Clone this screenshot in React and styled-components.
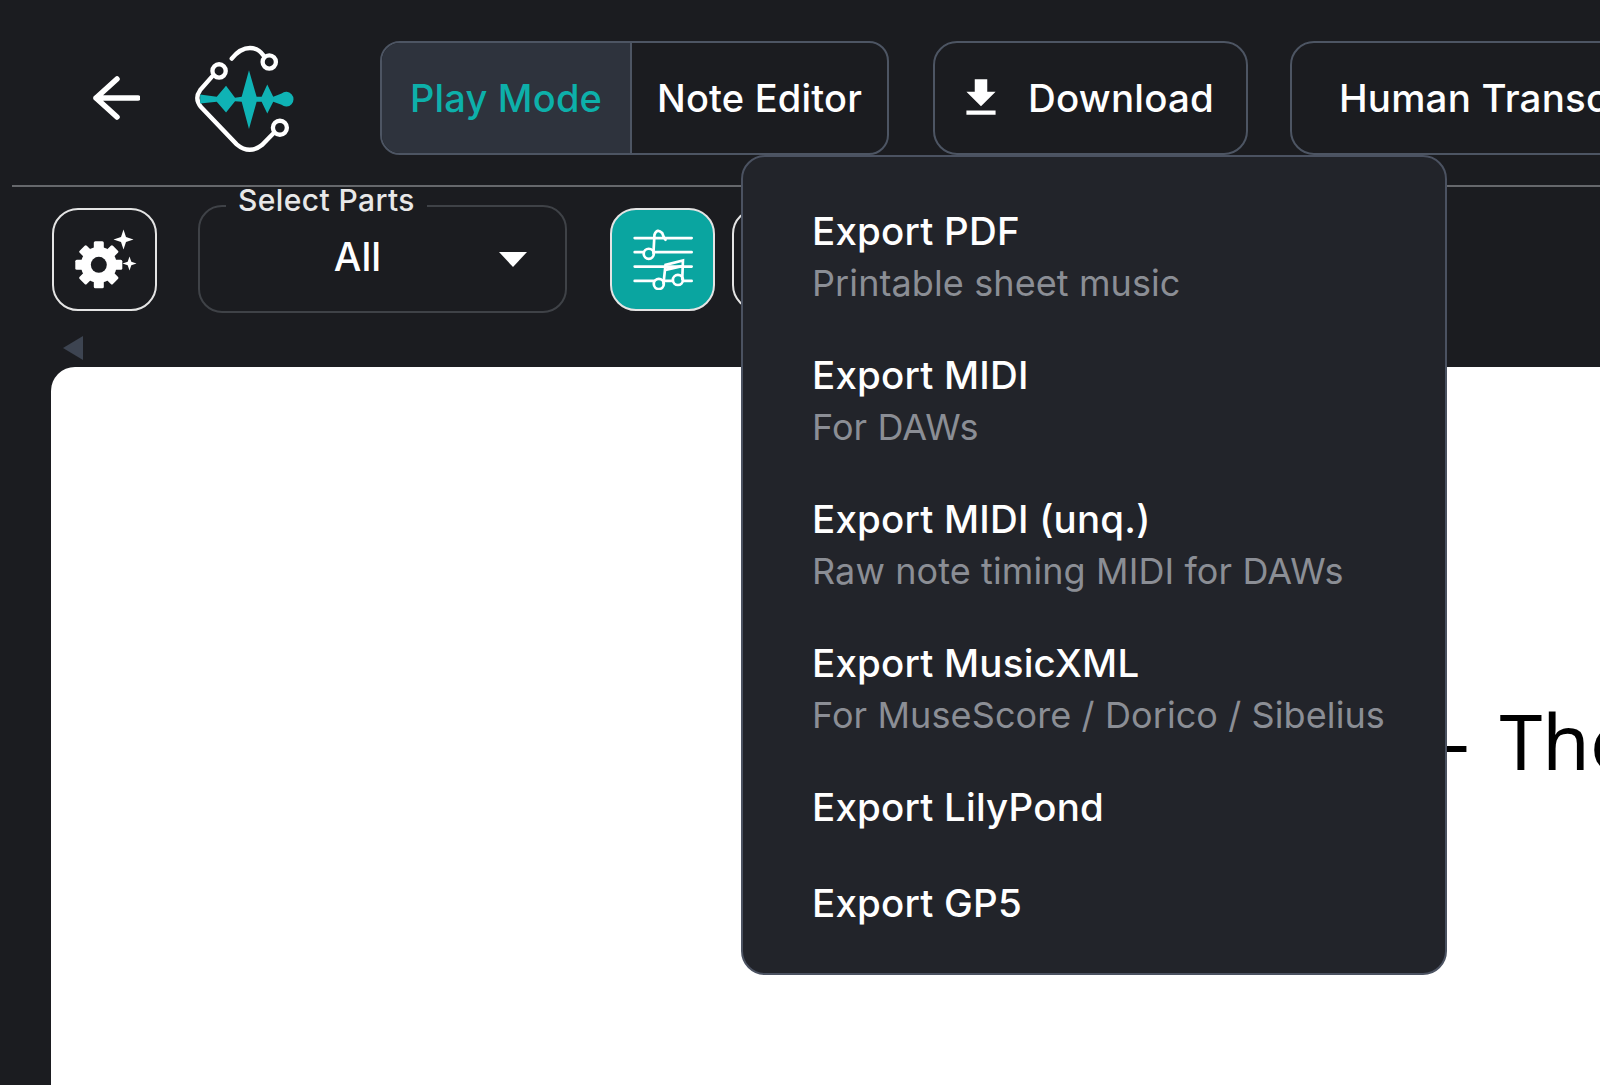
import React from "react";
import styled, { createGlobalStyle } from "styled-components";
import { MdFileDownload } from "react-icons/md";

const GlobalStyle = createGlobalStyle`
  html, body {
    margin: 0;
    height: 100%;
    background: #1b1c20;
    overflow: hidden;
  }
  #root {
    height: 100%;
  }
  * {
    box-sizing: border-box;
  }
`;

const Page = styled.div`
  position: relative;
  height: 1085px;
  display: flex;
  flex-direction: column;
  overflow: hidden;
  background: #1b1c20;
  color: #fff;
  font-family: "Inter", "Liberation Sans", sans-serif;
`;

const Header = styled.header`
  display: flex;
  align-items: center;
  height: 187px;
  margin-left: 12px;
  padding: 41px 0 30px 81px;
  border-bottom: 2px solid #66686c;
  white-space: nowrap;
`;

const BackArrow = styled.svg`
  width: 47px;
  height: 44px;
  flex: none;
  margin-right: 50px;
`;

const Logo = styled.svg`
  width: 110px;
  height: 113px;
  flex: none;
  margin-right: 80px;
`;

const ModeToggle = styled.div`
  display: flex;
  width: 509px;
  height: 114px;
  flex: none;
  margin-right: 44px;
  border: 2px solid #4d5563;
  border-radius: 20px;
  overflow: hidden;
`;

const ModeTab = styled.div`
  display: flex;
  align-items: center;
  justify-content: center;
  width: ${(p) => p.$width}px;
  background: ${(p) => (p.$active ? "#2e333d" : "transparent")};
  color: ${(p) => (p.$active ? "#0db0aa" : "#fff")};
  border-right: ${(p) => (p.$active ? "2px solid #4d5563" : "none")};
  font-size: 38px;
  font-weight: 500;
  letter-spacing: 0.2px;
`;

const HeaderButton = styled.div`
  display: flex;
  align-items: center;
  gap: ${(p) => p.$gap || 0}px;
  height: 114px;
  width: ${(p) => p.$width}px;
  flex: none;
  margin-right: 42px;
  padding-left: ${(p) => p.$pad}px;
  border: 2px solid #4d5563;
  border-radius: 24px;
  font-size: 38.500px;
  font-weight: 500;
  letter-spacing: 0.2px;
`;

const DownloadIcon = styled(MdFileDownload)`
  flex: none;
  margin-left: -2px;
`;

const Toolbar = styled.div`
  display: flex;
  align-items: center;
  height: 108px;
  margin-top: 18px;
  padding-left: 52px;
`;

const IconButton = styled.div`
  display: flex;
  align-items: center;
  justify-content: center;
  width: 105px;
  height: 103px;
  flex: none;
  margin-right: ${(p) => p.$after}px;
  background: ${(p) => (p.$active ? "#0aa5a0" : "transparent")};
  border: 2px solid #e4e4e4;
  border-radius: 26px;
`;

const PartSelect = styled.div`
  position: relative;
  display: flex;
  align-items: center;
  justify-content: center;
  width: 369px;
  height: 108px;
  flex: none;
  margin-right: 43px;
  padding: 0 50px 6px 0;
  border: 2px solid #3f4247;
  border-radius: 24px;
  font-size: 39px;
  font-weight: 500;
`;

const PartLabel = styled.span`
  position: absolute;
  left: 26px;
  top: -17px;
  padding: 0 12px;
  background: #1b1c20;
  font-size: 30px;
  font-weight: 500;
  line-height: 20px;
  letter-spacing: 0.4px;
  white-space: nowrap;
  color: #e8e8e8;
`;

const Caret = styled.span`
  position: absolute;
  right: 38px;
  top: 45px;
  border-left: 14px solid transparent;
  border-right: 14px solid transparent;
  border-top: 15px solid #fff;
`;

const CollapseRow = styled.div`
  display: flex;
  height: 24px;
  margin-top: 23px;
  padding-left: 63px;
`;

const CollapseArrow = styled.span`
  width: 0;
  height: 0;
  border-top: 12px solid transparent;
  border-bottom: 12px solid transparent;
  border-right: 20px solid #3d4451;
`;

const Sheet = styled.main`
  flex: 1;
  margin: 7px 0 0 51px;
  padding: 321px 0 0 1380px;
  background: #fff;
  border-radius: 24px 0 0 0;
  overflow: hidden;
`;

const SheetTitle = styled.h1`
  margin: 0;
  color: #000;
  font-family: "Noto Sans", "Open Sans", sans-serif;
  font-size: 77px;
  font-weight: 400;
  line-height: 105px;
  word-spacing: 10px;
  white-space: nowrap;
`;

const Menu = styled.div`
  position: absolute;
  left: 741px;
  top: 155px;
  width: 706px;
  padding: 28px 0 20px 69px;
  background: #22242a;
  border: 2px solid #4b5261;
  border-radius: 24px;
`;

const MenuItem = styled.div`
  padding: 23px 0 ${(p) => (p.$single ? 27 : 23)}px;
`;

const ItemTitle = styled.div`
  font-size: 38.500px;
  font-weight: 500;
  line-height: 46px;
  letter-spacing: 0.2px;
`;

const ItemHint = styled.div`
  margin-top: 6px;
  color: #8b8e95;
  font-size: 36px;
  line-height: 46px;
  letter-spacing: 0.1px;
  white-space: nowrap;
`;

const exportItems = [
  { title: "Export PDF", hint: "Printable sheet music" },
  { title: "Export MIDI", hint: "For DAWs" },
  { title: "Export MIDI (unq.)", hint: "Raw note timing MIDI for DAWs" },
  { title: "Export MusicXML", hint: "For MuseScore / Dorico / Sibelius" },
  { title: "Export LilyPond" },
  { title: "Export GP5" },
];

function LogoMark() {
  return (
    <Logo viewBox="390 60 330 340">
      <g fill="none" stroke="#fff" strokeWidth="13" strokeLinecap="round">
        <path d="M515 110 C535 85 555 78 570 78 C585 78 600 85 610 100" />
        <circle cx="628" cy="120" r="20" />
        <circle cx="477" cy="147" r="20" />
        <path d="M455 165 L420 205 Q402 230 422 255 L530 368 Q568 400 606 370 L640 335" />
        <circle cx="660" cy="318" r="21" />
      </g>
      <path
        fill="#0fb3b5"
        d="M420 218 L470 225 L498 192 L525 228 L545 225 L567 145 L590 225 L605 225 L622 188 L640 225 L665 215 A22 22 0 1 1 665 249 L640 240 L622 275 L605 240 L590 240 L567 322 L545 240 L525 238 L498 272 L470 240 L420 245 Z"
      />
    </Logo>
  );
}

function GearSparkIcon() {
  return (
    <svg width="66" height="62" viewBox="0 0 66 62">
      <g fill="#fff">
        <g transform="translate(26.800 36.800)">
          {[0, 45, 90, 135].map((angle) => (
            <rect key={angle} x="-5" y="-23.500" width="10" height="47" rx="1.500" transform={`rotate(${angle})`} />
          ))}
          <circle r="18" />
          <circle r="8" fill="#1b1c20" />
        </g>
        <path d="M51.500 1.500 L54 9 L61.500 11.500 L54 14 L51.500 21.500 L49 14 L41.500 11.500 L49 9 Z" />
        <path d="M57.500 28.500 L59.300 33.700 L64.500 35.500 L59.300 37.300 L57.500 42.500 L55.700 37.300 L50.500 35.500 L55.700 33.700 Z" />
      </g>
    </svg>
  );
}

function ScoreIcon() {
  return (
    <svg width="60" height="62" viewBox="155 175 175 185" fill="none" stroke="#fff" strokeWidth="8" strokeLinecap="round">
      <path d="M158 205 H328 M158 247 H328 M158 290 H328 M158 333 H328" />
      <circle cx="200" cy="252" r="15" fill="#0aa5a0" />
      <path d="M214 250 L217 195 Q225 175 240 190 Q245 205 250 210" />
      <circle cx="230" cy="342" r="15" fill="#0aa5a0" />
      <circle cx="287" cy="330" r="15" fill="#0aa5a0" />
      <path d="M244 340 L250 285 L302 272 L300 328 M250 300 L302 288" />
    </svg>
  );
}

export default function App() {
  return (
    <Page>
      <GlobalStyle />
      <Header>
        <BackArrow viewBox="0 0 47 44" fill="none" stroke="#fff" strokeWidth="5.500" strokeLinecap="round" strokeLinejoin="round">
          <path d="M45 22 H3 M24 3 L3 22 L24 41" />
        </BackArrow>
        <LogoMark />
        <ModeToggle>
          <ModeTab $active $width={251}>Play Mode</ModeTab>
          <ModeTab $width={256}>Note Editor</ModeTab>
        </ModeToggle>
        <HeaderButton $width={315} $pad={23} $gap={22}>
          <DownloadIcon size={50} />
          Download
        </HeaderButton>
        <HeaderButton $width={520} $pad={47}>Human Transcription</HeaderButton>
      </Header>

      <Toolbar>
        <IconButton $after={41}>
          <GearSparkIcon />
        </IconButton>
        <PartSelect>
          <PartLabel>Select Parts</PartLabel>
          All
          <Caret />
        </PartSelect>
        <IconButton $active $after={17}>
          <ScoreIcon />
        </IconButton>
        <IconButton $after={17} />
      </Toolbar>

      <CollapseRow>
        <CollapseArrow />
      </CollapseRow>

      <Sheet>
        <SheetTitle>– The Score</SheetTitle>
      </Sheet>

      <Menu>
        {exportItems.map((item) => (
          <MenuItem key={item.title} $single={!item.hint}>
            <ItemTitle>{item.title}</ItemTitle>
            {item.hint && <ItemHint>{item.hint}</ItemHint>}
          </MenuItem>
        ))}
      </Menu>
    </Page>
  );
}
